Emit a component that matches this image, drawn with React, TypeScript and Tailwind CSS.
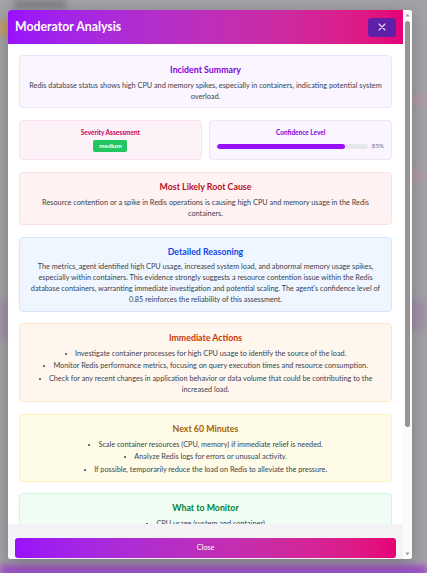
import React from "react";

const font = { fontFamily: "Lato, 'Noto Sans', sans-serif" };

function Card({
  title,
  titleClass,
  boxClass,
  children,
}: {
  title: string;
  titleClass: string;
  boxClass: string;
  children: React.ReactNode;
}) {
  return (
    <div className={`shrink-0 rounded-[4px] border px-[8px] pt-[8px] pb-[5.5px] text-center ${boxClass}`}>
      <h3 className={`text-[8.8px] font-bold leading-[12px] mb-[3.5px] ${titleClass}`}>{title}</h3>
      {children}
    </div>
  );
}

function Para({ children }: { children: React.ReactNode }) {
  return <p className="text-[7.3px] leading-[11px] text-[#3b424d]">{children}</p>;
}

function List({ items }: { items: string[] }) {
  return (
    <ul className="list-disc list-inside text-[7.3px] leading-[11.5px] text-[#3b424d] flex flex-col gap-[1px]">
      {items.map((t) => (
        <li key={t}>{t}</li>
      ))}
    </ul>
  );
}

export default function App() {
  return (
    <div
      className="relative w-[427px] h-[573px] overflow-hidden bg-[#a4a2a6] pt-[10px] pl-[8px]"
      style={font}
    >
      {/* blurred backdrop page */}
      <div aria-hidden className="absolute inset-0 blur-[3px]">
        <div className="absolute left-[14px] top-[1px] w-[52px] h-[7px] bg-[#7d7a80]" />
        <div className="absolute left-0 top-[20px] w-[10px] h-[16px] bg-[#c99a5c]" />
        <div className="absolute right-0 top-[95px] w-[20px] h-[10px] bg-[#b39aa8]" />
        <div className="absolute right-0 top-[170px] w-[20px] h-[10px] bg-[#b39aa8]" />
        <div className="absolute right-0 top-[300px] w-[20px] h-[30px] bg-[#a092a8]" />
        <div className="absolute left-0 top-[300px] w-[10px] h-[40px] bg-[#a092a8]" />
        <div className="absolute left-0 right-0 bottom-[-4px] h-[12px] bg-[#9a4fc4]" />
      </div>

      {/* modal */}
      <div className="relative flex w-[404px] h-[549px] bg-white rounded-[3px] overflow-hidden shadow-[0_4px_16px_rgba(0,0,0,0.25)]">
        <div className="flex flex-col w-[395px] h-full">
          {/* header */}
          <div className="shrink-0 h-[34px] flex items-center justify-between px-[7px] bg-linear-to-r from-[#9810fa] to-[#e60076]">
            <h2 className="text-[12.3px] font-bold text-white leading-none">Moderator Analysis</h2>
            <button className="w-[28px] h-[19px] rounded-[3px] bg-[#5f1fa8] flex items-center justify-center">
              <svg width="8" height="8" viewBox="0 0 8 8" fill="none" stroke="#f0dcf5" strokeWidth="1.1" strokeLinecap="round">
                <path d="M1 1 L7 7 M7 1 L1 7" />
              </svg>
            </button>
          </div>

          {/* body */}
          <div className="flex-1 min-h-0 overflow-hidden px-[11px] pt-[11.3px] flex flex-col gap-[11.7px]">
            <div className="shrink-0 rounded-[4px] border border-[#efe3fb] bg-[#faf5ff] px-[8px] pt-[8px] pb-[5.5px] text-center">
              <h3 className="text-[8.8px] font-bold leading-[12px] mb-[3.5px] text-[#8200db]">Incident Summary</h3>
              <Para>
                Redis database status shows high CPU and memory spikes, especially in containers, indicating potential system overload.
              </Para>
            </div>

            <div className="shrink-0 grid grid-cols-2 gap-[7.6px]">
              <div className="h-[40.4px] rounded-[4px] border border-[#fbe0ee] bg-[#fdf2f8] flex flex-col items-center pt-[7px]">
                <h4 className="text-[6.5px] font-bold leading-[10px] text-[#c6005c]">Severity Assessment</h4>
                <span className="mt-[2px] w-[34px] h-[11.7px] rounded-[2px] bg-[#22c55e] text-white text-[6.3px] font-bold leading-[11.7px] text-center">
                  medium
                </span>
              </div>
              <div className="h-[40.4px] rounded-[4px] border border-[#efe3fb] bg-[#faf5ff] flex flex-col pt-[7px] px-[7px]">
                <h4 className="text-[6.5px] font-bold leading-[10px] text-[#8200db] text-center">Confidence Level</h4>
                <div className="mt-[5px] flex items-center gap-[4px]">
                  <div className="flex-1 h-[5px] rounded-full bg-[#e5e7eb] overflow-hidden">
                    <div className="h-full rounded-full bg-[#9810fa]" style={{ width: "85%" }} />
                  </div>
                  <span className="text-[6.2px] leading-none text-[#6a7282]">85%</span>
                </div>
              </div>
            </div>

            <Card title="Most Likely Root Cause" titleClass="text-[#b9101a]" boxClass="border-[#fde0e0] bg-[#fef2f2]">
              <Para>
                Resource contention or a spike in Redis operations is causing high CPU and memory usage in the Redis containers.
              </Para>
            </Card>

            <Card title="Detailed Reasoning" titleClass="text-[#1447e6]" boxClass="border-[#d6e6fd] bg-[#eff6ff]">
              <Para>
                The metrics_agent identified high CPU usage, increased system load, and abnormal memory usage spikes, especially within containers. This evidence strongly suggests a resource contention issue within the Redis database containers, warranting immediate investigation and potential scaling. The agent's confidence level of 0.85 reinforces the reliability of this assessment.
              </Para>
            </Card>

            <Card title="Immediate Actions" titleClass="text-[#ca3500]" boxClass="border-[#fde6cc] bg-[#fff7ed]">
              <List
                items={[
                  "Investigate container processes for high CPU usage to identify the source of the load.",
                  "Monitor Redis performance metrics, focusing on query execution times and resource consumption.",
                  "Check for any recent changes in application behavior or data volume that could be contributing to the increased load.",
                ]}
              />
            </Card>

            <Card title="Next 60 Minutes" titleClass="text-[#a65f00]" boxClass="border-[#fdf3b8] bg-[#fefce8]">
              <List
                items={[
                  "Scale container resources (CPU, memory) if immediate relief is needed.",
                  "Analyze Redis logs for errors or unusual activity.",
                  "If possible, temporarily reduce the load on Redis to alleviate the pressure.",
                ]}
              />
            </Card>

            <Card title="What to Monitor" titleClass="text-[#008236]" boxClass="border-[#d3f5de] bg-[#f0fdf4]">
              <List items={["CPU usage (system and container)"]} />
            </Card>
          </div>

          {/* footer */}
          <div className="shrink-0 h-[35px] bg-[#f3f3f5] px-[7px] pt-[8px]">
            <button className="w-full h-[20px] rounded-[3px] bg-linear-to-r from-[#9810fa] to-[#e60076] text-white text-[7.3px] leading-[20px] text-center">
              Close
            </button>
          </div>
        </div>

        {/* scrollbar */}
        <div className="w-[9px] h-full bg-[#fbfbfb] flex flex-col items-center">
          <svg width="5" height="4" viewBox="0 0 5 4" className="mt-[3px]">
            <path d="M0.5 3.5 L2.5 0.8 L4.5 3.5 Z" fill="#9a9a9a" />
          </svg>
          <div className="mt-[4px] w-[5px] h-[406px] rounded-full bg-[#959595]" />
          <div className="flex-1" />
          <svg width="5" height="4" viewBox="0 0 5 4" className="mb-[3px]">
            <path d="M0.5 0.5 L2.5 3.2 L4.5 0.5 Z" fill="#9a9a9a" />
          </svg>
        </div>
      </div>
    </div>
  );
}
